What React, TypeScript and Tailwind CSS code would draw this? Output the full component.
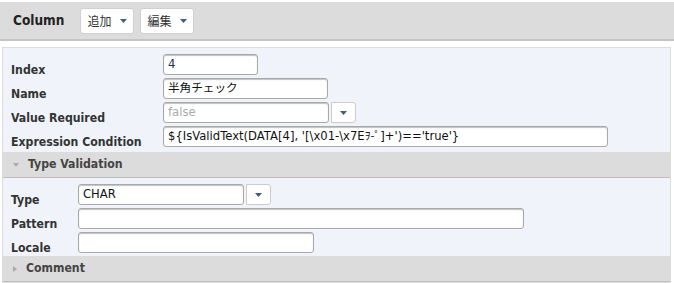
import React from 'react';

const labelFont = { fontFamily: '"DejaVu Sans Condensed", "DejaVu Sans", Verdana, sans-serif' };
const inputFont = { fontFamily: '"DejaVu Sans", "Noto Sans CJK JP", sans-serif' };

function Caret({ className = '' }: { className?: string }) {
  return (
    <svg width="7" height="4" viewBox="0 0 7 4" className={className}>
      <path d="M0 0h7L3.5 4z" fill="#3f5f7f" />
    </svg>
  );
}

function TextInput({ width, value, muted, tone = 'text-[#111]' }: { width: string; value?: string; muted?: boolean; tone?: string }) {
  return (
    <div
      className={`${width} h-[21px] bg-white border border-[#a9a9a9] rounded-[3px] shadow-[inset_0_1px_1px_rgba(0,0,0,0.25)] px-[4px] flex items-center text-[11.6px] whitespace-nowrap ${muted ? 'text-[#aaa]' : tone}`}
      style={inputFont}
    >
      {value}
    </div>
  );
}

function Select({ width, value, muted }: { width: string; value: string; muted?: boolean }) {
  return (
    <div className="flex items-center gap-[2px]">
      <TextInput width={width} value={value} muted={muted} />
      <div className="w-[25px] h-[21px] bg-white border border-[#ccc] rounded-r-[3px] flex items-center justify-center">
        <Caret />
      </div>
    </div>
  );
}

function Row({ label, labelWidth, children }: { label: string; labelWidth: string; children: React.ReactNode }) {
  return (
    <div className="flex items-end h-[24px]">
      <div className={`${labelWidth} pl-[8px] -mb-[2px] text-[12.2px] font-bold text-[#333]`} style={labelFont}>
        {label}
      </div>
      <div className="pb-[2px]">{children}</div>
    </div>
  );
}

function SectionHeader({ title, open }: { title: string; open?: boolean }) {
  return (
    <div className="h-[26px] bg-[#dcdcdc] border-b border-[#bdbdbd] flex items-center pl-[10px] gap-[9px]">
      {open ? (
        <svg width="6" height="4" viewBox="0 0 6 4"><path d="M0 0h6L3 4z" fill="#aaa" /></svg>
      ) : (
        <svg width="4" height="6" viewBox="0 0 4 6"><path d="M0 0v6L4 3z" fill="#aaa" /></svg>
      )}
      <span className="text-[12.2px] font-bold text-[#444]" style={labelFont}>{title}</span>
    </div>
  );
}

function ToolButton({ label }: { label: string }) {
  return (
    <button className="h-[26px] w-[54px] bg-white border border-[#cfcfcf] rounded-[3px] flex items-center justify-center gap-[8px] text-[12px] text-[#333]" style={{ fontFamily: '"Noto Sans CJK JP", sans-serif' }}>
      {label}
      <Caret />
    </button>
  );
}

export default function App() {
  return (
    <div className="w-[674px] h-[283px] bg-white pt-[2px]" style={{ fontFamily: '"Noto Sans", "Noto Sans CJK JP", sans-serif' }}>
      <div className="h-[39px] bg-[#dcdcdc] border-b-2 border-[#c4c4c4] flex items-center pl-[13px] pr-[4px]">
        <span className="text-[13.5px] font-bold text-[#222] w-[67px]" style={labelFont}>Column</span>
        <div className="flex gap-[6px] pt-[1px]">
          <ToolButton label="追加" />
          <ToolButton label="編集" />
        </div>
      </div>
      <div className="mt-[6px] mx-[2px] w-[669px] border border-[#dcdcdc] bg-[#f0f4fa]">
        <div className="pt-[5px] pb-[3px]">
          <Row label="Index" labelWidth="w-[160px]">
            <TextInput width="w-[95px]" value="4" tone="text-[#1a2f5a]" />
          </Row>
          <Row label="Name" labelWidth="w-[160px]">
            <TextInput width="w-[165px]" value="半角チェック" />
          </Row>
          <Row label="Value Required" labelWidth="w-[160px]">
            <Select width="w-[166px]" value="false" muted />
          </Row>
          <Row label="Expression Condition" labelWidth="w-[160px]">
            <TextInput width="w-[445px]" value={"${IsValidText(DATA[4], '[\\x01-\\x7Eｦ-ﾟ]+')=='true'}"} />
          </Row>
        </div>
        <SectionHeader title="Type Validation" open />
        <div className="pt-[5px] pb-[1px]">
          <Row label="Type" labelWidth="w-[75px]">
            <Select width="w-[166px]" value="CHAR" />
          </Row>
          <Row label="Pattern" labelWidth="w-[75px]">
            <TextInput width="w-[446px]" />
          </Row>
          <Row label="Locale" labelWidth="w-[75px]">
            <TextInput width="w-[236px]" />
          </Row>
        </div>
        <SectionHeader title="Comment" />
      </div>
    </div>
  );
}
